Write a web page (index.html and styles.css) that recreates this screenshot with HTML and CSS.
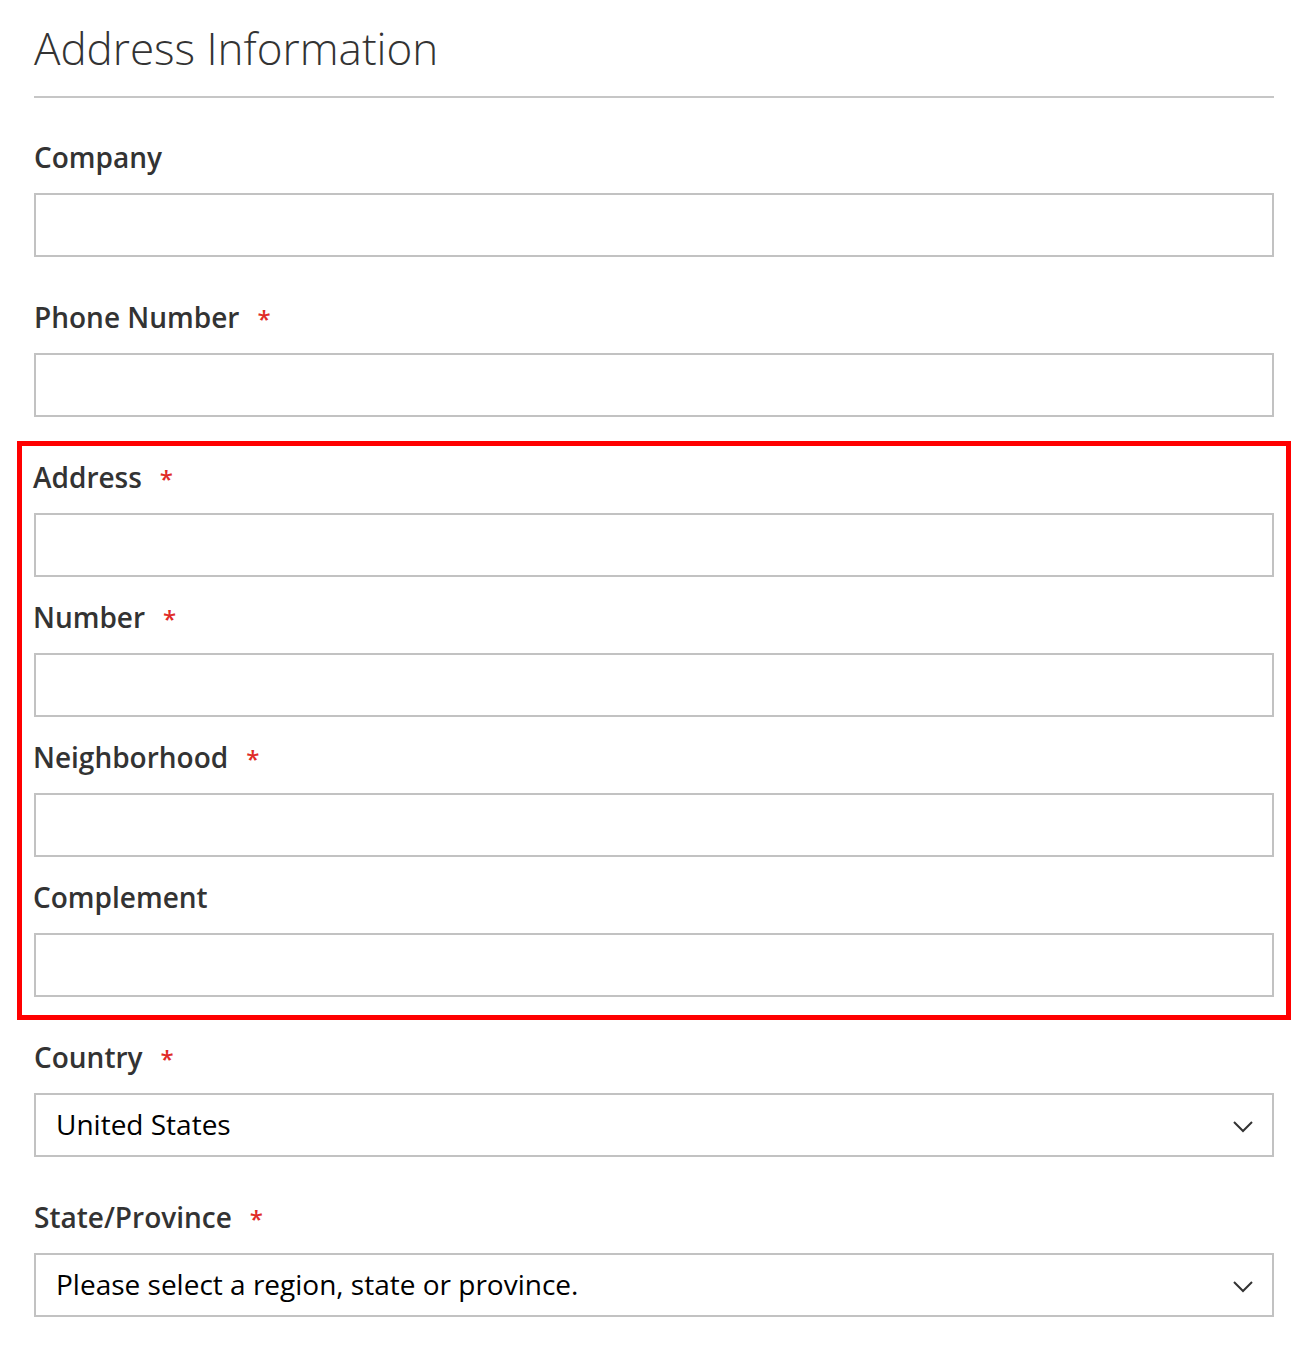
FILE: index.html
```html
<!DOCTYPE html>
<html lang="en">
<head>
    <meta charset="UTF-8">
    <meta name="viewport" content="width=device-width, initial-scale=1.0">
    <title>Address Information</title>
    <link rel="stylesheet" href="styles.css">
</head>
<body>
    <fieldset class="fieldset">
        <legend class="legend">Address Information</legend>

        <div class="field">
            <label class="label" for="company">Company</label>
            <input type="text" id="company" class="input-text">
        </div>
        <div class="field">
            <label class="label required" for="telephone">Phone Number</label>
            <input type="text" id="telephone" class="input-text">
        </div>

        <div class="highlight">
            <div class="field">
                <label class="label required" for="street">Address</label>
                <input type="text" id="street" class="input-text">
            </div>
            <div class="field">
                <label class="label required" for="number">Number</label>
                <input type="text" id="number" class="input-text">
            </div>
            <div class="field">
                <label class="label required" for="neighborhood">Neighborhood</label>
                <input type="text" id="neighborhood" class="input-text">
            </div>
            <div class="field">
                <label class="label" for="complement">Complement</label>
                <input type="text" id="complement" class="input-text">
            </div>
        </div>

        <div class="field">
            <label class="label required" for="country">Country</label>
            <div class="select">
                <span>United States</span>
                <svg class="chevron" width="22" height="14" viewBox="0 0 22 14">
                    <path d="M2 2 L11 11 L20 2" fill="none" stroke="#333" stroke-width="2"/>
                </svg>
            </div>
        </div>
        <div class="field">
            <label class="label required" for="region">State/Province</label>
            <div class="select">
                <span>Please select a region, state or province.</span>
                <svg class="chevron" width="22" height="14" viewBox="0 0 22 14">
                    <path d="M2 2 L11 11 L20 2" fill="none" stroke="#333" stroke-width="2"/>
                </svg>
            </div>
        </div>
    </fieldset>
</body>
</html>
```

FILE: styles.css
```css
html {
    box-sizing: border-box;
}
*, *::before, *::after {
    box-sizing: inherit;
}
body {
    margin : 0;
    padding: 0 36px 0 34px;

    font-family     : "Open Sans", "Liberation Sans", sans-serif;
    color           : #333;
    background-color: #fff;
}
.fieldset {
    margin   : 0;
    padding  : 0;
    border   : none;
    min-width: 0;
}
.legend {
    display: block;
    width  : 100%;
    padding: 22px 0 22px;
    margin : 0 0 38px;

    font-size  : 44px;
    font-weight: 300;
    line-height: 52px;
    color      : #333;

    border-bottom: 2px solid #c6c6c6;
}
.field {
    margin-bottom: 39px;
}
.label {
    display      : block;
    height       : 42px;
    margin-bottom: 15px;

    font-size  : 28px;
    font-weight: 600;
    line-height: 42px;
}
.label.required::after {
    content    : '*';
    margin-left: 18px;

    font-size  : 24px;
    line-height: 1;
    color      : #e02b27;
}
.input-text {
    display: block;
    width  : 100%;
    height : 64px;
    margin : 0;
    padding: 0 20px;

    font-family: inherit;
    font-size  : 28px;

    border    : 2px solid #c2c2c2;
    background: #fff;
}
.highlight {
    margin : -15px -17px 16px;
    padding: 10px 12px 18px;

    border: 5px solid #ff0000;
}
.highlight .label {
    margin-left: -1px;
}
.highlight .field {
    margin-bottom: 19px;
}
.highlight .field:last-child {
    margin-bottom: 0;
}
.select {
    display        : flex;
    align-items    : center;
    justify-content: space-between;
    height         : 64px;
    padding        : 0 18px 3px 20px;

    font-size: 28px;
    color    : #000;

    border: 2px solid #c2c2c2;
}
.chevron {
    margin-top: 7px;
}
```
